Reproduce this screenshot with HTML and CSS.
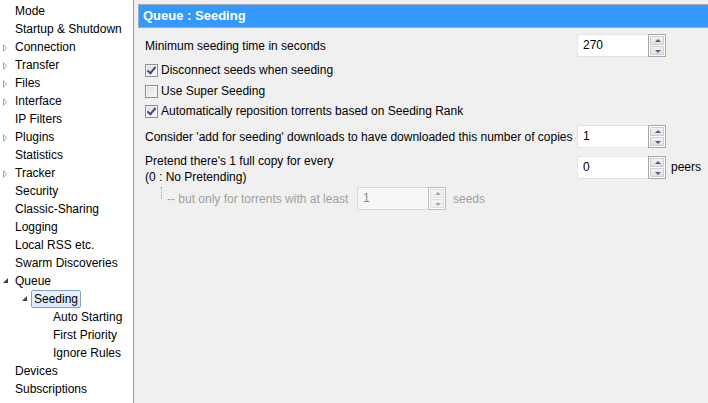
FILE: index.html
```html
<!DOCTYPE html>
<html>
<head>
<meta charset="utf-8">
<link rel="stylesheet" href="styles.css">
</head>
<body>
<div class="app">
  <ul class="tree">
    <li class="row"><span class="exp"></span><span class="lbl">Mode</span></li>
    <li class="row"><span class="exp"></span><span class="lbl">Startup &amp; Shutdown</span></li>
    <li class="row"><span class="exp closed"></span><span class="lbl">Connection</span></li>
    <li class="row"><span class="exp closed"></span><span class="lbl">Transfer</span></li>
    <li class="row"><span class="exp closed"></span><span class="lbl">Files</span></li>
    <li class="row"><span class="exp closed"></span><span class="lbl">Interface</span></li>
    <li class="row"><span class="exp"></span><span class="lbl">IP Filters</span></li>
    <li class="row"><span class="exp closed"></span><span class="lbl">Plugins</span></li>
    <li class="row"><span class="exp"></span><span class="lbl">Statistics</span></li>
    <li class="row"><span class="exp closed"></span><span class="lbl">Tracker</span></li>
    <li class="row"><span class="exp"></span><span class="lbl">Security</span></li>
    <li class="row"><span class="exp"></span><span class="lbl">Classic-Sharing</span></li>
    <li class="row"><span class="exp"></span><span class="lbl">Logging</span></li>
    <li class="row"><span class="exp"></span><span class="lbl">Local RSS etc.</span></li>
    <li class="row"><span class="exp"></span><span class="lbl">Swarm Discoveries</span></li>
    <li class="row"><span class="exp open"></span><span class="lbl">Queue</span></li>
    <li class="row l1"><span class="exp open"></span><span class="lbl sel">Seeding</span></li>
    <li class="row l2"><span class="exp"></span><span class="lbl">Auto Starting</span></li>
    <li class="row l2"><span class="exp"></span><span class="lbl">First Priority</span></li>
    <li class="row l2"><span class="exp"></span><span class="lbl">Ignore Rules</span></li>
    <li class="row"><span class="exp"></span><span class="lbl">Devices</span></li>
    <li class="row"><span class="exp"></span><span class="lbl">Subscriptions</span></li>
  </ul>
  <div class="main">
    <div class="header">Queue : Seeding</div>
    <div class="content">
      <div class="field r1">
        <span class="flabel">Minimum seeding time in seconds</span>
        <div class="spin"><span class="val">270</span><span class="btns"><span class="b up"></span><span class="b down"></span></span></div>
      </div>
      <div class="check r2"><span class="cb on"></span><span>Disconnect seeds when seeding</span></div>
      <div class="check r3"><span class="cb"></span><span>Use Super Seeding</span></div>
      <div class="check r4"><span class="cb on"></span><span>Automatically reposition torrents based on Seeding Rank</span></div>
      <div class="field r5">
        <span class="flabel">Consider 'add for seeding' downloads to have downloaded this number of copies</span>
        <div class="spin"><span class="val">1</span><span class="btns"><span class="b up"></span><span class="b down"></span></span></div>
      </div>
      <div class="field r6">
        <span class="flabel multi">Pretend there's 1 full copy for every<br>(0 : No Pretending)</span>
        <div class="spin"><span class="val">0</span><span class="btns"><span class="b up"></span><span class="b down"></span></span></div>
        <span class="unit">peers</span>
      </div>
      <div class="sub r7">
        <span class="conn"></span>
        <span class="dlabel">-- but only for torrents with at least</span>
        <div class="spin dis"><span class="val">1</span><span class="btns"><span class="b up"></span><span class="b down"></span></span></div>
        <span class="unit dunit">seeds</span>
      </div>
    </div>
  </div>
</div>
</body>
</html>
```

FILE: styles.css
```css
html, body {
  margin: 0;
  padding: 0;
}
body {
  font-family: "Liberation Sans", Arial, sans-serif;
  font-size: 12px;
  color: #000;
  background: #f0f0f0;
}
.app {
  display: flex;
  width: 708px;
  height: 403px;
  overflow: hidden;
}
.tree {
  list-style: none;
  margin: 0;
  padding: 2px 0 0 0;
  flex: none;
  background: #fff;
  border-right: 1px solid #a0a0a0;
  box-sizing: border-box;
  width: 134px;
}
.row {
  height: 18px;
  display: flex;
  align-items: center;
  white-space: nowrap;
}
.row .exp {
  width: 15px;
  flex: none;
  height: 18px;
  position: relative;
}
.row.l1 { padding-left: 19px; }
.row.l2 { padding-left: 38px; }
.exp.closed::before {
  content: "";
  position: absolute;
  left: 3px;
  top: 6px;
  width: 0;
  height: 0;
  border-top: 4px solid transparent;
  border-bottom: 4px solid transparent;
  border-left: 4px solid #a6a6a6;
}
.exp.closed::after {
  content: "";
  position: absolute;
  left: 4px;
  top: 8px;
  width: 0;
  height: 0;
  border-top: 2px solid transparent;
  border-bottom: 2px solid transparent;
  border-left: 2px solid #fff;
}
.exp.open::before {
  content: "";
  position: absolute;
  left: 3px;
  top: 6px;
  width: 0;
  height: 0;
  border-left: 5px solid transparent;
  border-bottom: 5px solid #404040;
}
.lbl {
  line-height: 16px;
  padding: 0;
}
.lbl.sel {
  margin-left: -3px;
  padding: 0 2px;
  height: 16px;
  border: 1px solid #7da2ce;
  border-radius: 2px;
  background: linear-gradient(#eaf3fd, #d9e9fb);
}
.main {
  flex: 1;
  padding: 4px 0 0 4px;
}
.header {
  height: 22px;
  line-height: 22px;
  background: #3399ff;
  border: 1px solid #a9a9a9;
  border-right: none;
  color: #fff;
  font-weight: bold;
  font-size: 13px;
  padding-left: 4px;
}
.content {
  padding-left: 7px;
}
.field {
  display: flex;
  align-items: center;
}
.flabel {
  width: 432px;
  flex: none;
  white-space: nowrap;
}
.flabel.multi {
  line-height: 16px;
}
.r1 { margin-top: 6px; height: 23px; }
.check {
  display: flex;
  align-items: center;
  height: 16px;
}
.r2 { margin-top: 5px; }
.r3 { margin-top: 5px; }
.r4 { margin-top: 4px; }
.r5 { margin-top: 6px; height: 23px; }
.r6 { margin-top: 5px; align-items: flex-start; }
.r6 .spin { margin-top: 3px; }
.r6 .unit { margin-top: 7px; }
.cb {
  width: 11px;
  height: 11px;
  border: 1px solid #8e8f8f;
  background: linear-gradient(135deg, #dcdcdc, #fbfbfb);
  box-shadow: inset 0 0 0 1px #f4f4f4;
  margin-right: 3px;
  position: relative;
  flex: none;
}
.cb.on::after {
  content: "";
  position: absolute;
  left: 3px;
  top: 0px;
  width: 3px;
  height: 7px;
  border-right: 2px solid #3a4b8a;
  border-bottom: 2px solid #3a4b8a;
  transform: rotate(40deg);
}
.spin {
  width: 89px;
  height: 23px;
  box-sizing: border-box;
  display: flex;
  border: 1px solid #e2e3ea;
  border-right: none;
  background: #fff;
  flex: none;
}
.spin .val {
  flex: 1;
  padding-left: 5px;
  line-height: 21px;
}
.spin .btns {
  width: 18px;
  box-sizing: border-box;
  margin: -1px 0;
  border: 1px solid #a8a8a8;
  display: flex;
  flex-direction: column;
  padding: 1px;
  gap: 1px;
  background: #fff;
}
.spin .b {
  flex: 1;
  border: 1px solid #cfcfcf;
  background: linear-gradient(#f2f2f2, #e0e0e0);
  position: relative;
}
.spin .b::after {
  content: "";
  position: absolute;
  left: 4px;
  top: 3px;
  width: 0;
  height: 0;
  border-left: 3px solid transparent;
  border-right: 3px solid transparent;
}
.spin .up::after { border-bottom: 3px solid #4d6185; top: 2px; }
.spin .down::after { border-top: 3px solid #4d6185; }
.unit {
  margin-left: 5px;
}
.sub {
  margin-top: 2px;
  display: flex;
  align-items: center;
  height: 23px;
}
.conn {
  width: 16px;
  margin-left: 16px;
  height: 12px;
  align-self: flex-start;
  border-left: 1px dotted #a0a0a0;
  box-sizing: border-box;
  flex: none;
}
.dlabel {
  color: #a0a0a0;
  margin-left: -10px;
  width: 190px;
  padding-top: 1px;
  white-space: nowrap;
}
.spin.dis {
  border-color: #d8d8d8;
  background: #f6f6f6;
}
.spin.dis .val { color: #888; }
.spin.dis .btns { border-color: #bcbcbc; }
.spin.dis .b { border-color: #dedede; background: #f2f2f2; }
.spin.dis .up::after { border-bottom-color: #a8a8a8; }
.spin.dis .down::after { border-top-color: #a8a8a8; }
.dunit { color: #a0a0a0; margin-left: 7px; padding-top: 1px; }
```
